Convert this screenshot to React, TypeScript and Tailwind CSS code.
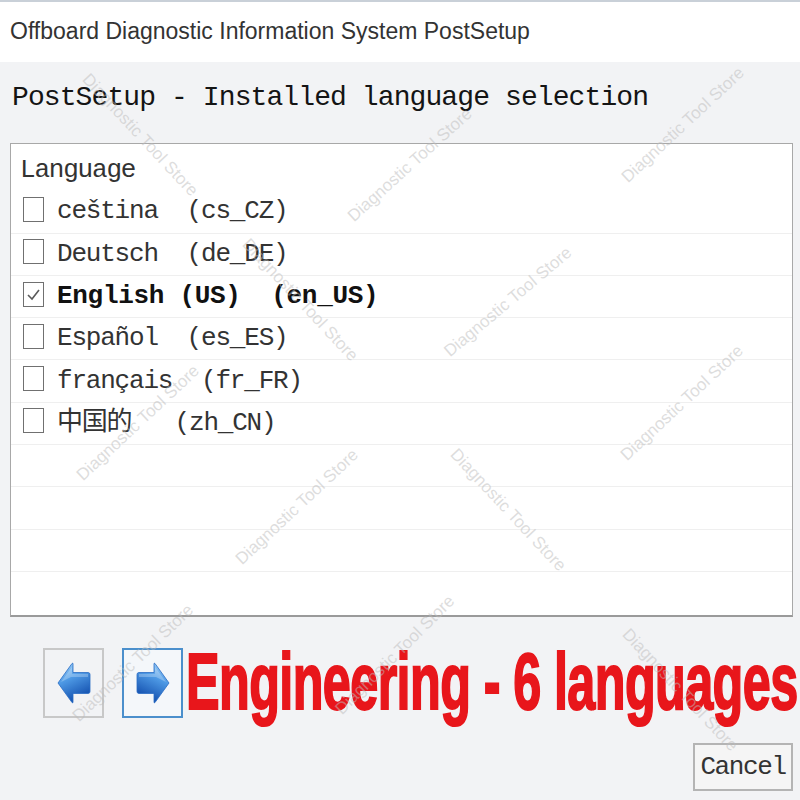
import React from 'react';

const languages = [
  { label: 'ceština  (cs_CZ)', checked: false },
  { label: 'Deutsch  (de_DE)', checked: false },
  { label: 'English (US)  (en_US)', checked: true },
  { label: 'Español  (es_ES)', checked: false },
  { label: 'français  (fr_FR)', checked: false },
  { label: '中国的   (zh_CN)', checked: false },
];

function Checkbox({ checked }: { checked: boolean }) {
  return (
    <div className="flex h-[25px] w-[21px] shrink-0 items-center justify-center border-[1.5px] border-[#707070] bg-white">
      {checked && (
        <svg width="15" height="15" viewBox="0 0 15 15">
          <polyline points="2,8 6,12 13,3" fill="none" stroke="#5a5a5a" strokeWidth="1.6" />
        </svg>
      )}
    </div>
  );
}

function Arrow({ flip }: { flip?: boolean }) {
  const id = flip ? 'arrR' : 'arrL';
  return (
    <svg width="34" height="42" viewBox="0 0 34 42" className={flip ? '-scale-x-100' : ''}>
      <defs>
        <linearGradient id={id} x1="0" y1="0" x2="0.4" y2="1">
          <stop offset="0" stopColor="#b4dcfa" />
          <stop offset="0.45" stopColor="#4f9be6" />
          <stop offset="1" stopColor="#1552b0" />
        </linearGradient>
      </defs>
      <path
        d="M1 21 L15 1.5 Q16 0.5 16 2 L16 10.5 L31 10.5 Q33 10.5 33 12.5 L33 29.5 Q33 31.5 31 31.5 L16 31.5 L16 40 Q16 41.5 15 40.5 Z"
        fill={`url(#${id})`}
        stroke="#2a6cc4"
        strokeWidth="0.8"
      />
      <path d="M4 20 L15 5 L15 12 L31 12 L31 15 L14 15 Z" fill="#ffffff" opacity="0.25" />
    </svg>
  );
}

function Mark({ className }: { className: string }) {
  return (
    <span
      className={`pointer-events-none absolute -translate-x-1/2 -translate-y-1/2 whitespace-nowrap text-[17px] text-[#bcbcbc]/50 ${className}`}
    >
      Diagnostic Tool Store
    </span>
  );
}

export default function App() {
  return (
    <div className="relative flex h-[800px] w-[800px] flex-col overflow-hidden bg-[#f2f3f5] font-['Liberation_Sans',sans-serif]">
      <div className="flex h-[62px] items-center border-t-2 border-[#c9d0d8] bg-white pl-[10px] pb-[1px] text-[23px] text-[#333333]">
        Offboard Diagnostic Information System PostSetup
      </div>

      <div className="pl-[12px] pt-[20px] font-['Liberation_Mono',monospace] text-[28px] leading-[32px] tracking-[-0.9px] whitespace-pre text-[#141414]">
        PostSetup - Installed language selection
      </div>

      <div className="mt-[29px] ml-[10px] mr-[7px] h-[474px] border border-[#a8a8a8] border-b-2 border-b-[#9a9a9a] bg-white pt-[5px] font-['Liberation_Mono','Noto_Sans_CJK_SC',monospace] text-[26px] tracking-[-1.2px] text-[#333333]">
        <div className="flex h-[42.3px] items-center pl-[9px]">Language</div>
        {languages.map((lang) => (
          <div key={lang.label} className="flex h-[42.3px] items-center border-b border-[#efefef] pl-[12px]">
            <div className="-mt-[5px]">
              <Checkbox checked={lang.checked} />
            </div>
            <span
              className={`ml-[13px] whitespace-pre ${lang.checked ? 'font-bold tracking-[-0.3px] text-[#111111]' : ''}`}
            >
              {lang.label}
            </span>
          </div>
        ))}
        <div className="h-[42.3px] border-b border-[#efefef]" />
        <div className="h-[42.3px] border-b border-[#efefef]" />
        <div className="h-[42.3px] border-b border-[#efefef]" />
      </div>

      <div className="mt-[31px] ml-[43px] flex items-center">
        <div className="flex h-[70px] w-[61px] items-center justify-center border-2 border-[#c8c8c8]">
          <Arrow />
        </div>
        <div className="ml-[18px] flex h-[70px] w-[61px] items-center justify-center border-2 border-[#4b8fcc] bg-[#f4f7fa]">
          <Arrow flip />
        </div>
        <div className="ml-[3px] flex h-[70px] w-[611px] items-center">
          <span className="-mt-[2px] inline-block origin-left scale-x-[0.63] whitespace-nowrap text-[80px] leading-none font-bold tracking-[-1px] text-[#e8161b] [-webkit-text-stroke:2px_#e8161b]">
            Engineering - 6 languages
          </span>
        </div>
      </div>

      <div className="mt-[25px] mr-[7px] flex justify-end">
        <div className="flex h-[48px] w-[100px] items-center justify-center border-2 border-[#b4b4b4] bg-[#f5f5f5] font-['Liberation_Mono',monospace] text-[26px] tracking-[-1.4px] text-[#333333]">
          Cancel
        </div>
      </div>

      <Mark className="left-[140px] top-[135px] rotate-[47deg]" />
      <Mark className="left-[410px] top-[165px] -rotate-[42deg]" />
      <Mark className="left-[683px] top-[125px] -rotate-[43deg]" />
      <Mark className="left-[300px] top-[300px] rotate-[47deg]" />
      <Mark className="left-[508px] top-[302px] -rotate-[40deg]" />
      <Mark className="left-[682px] top-[403px] -rotate-[43deg]" />
      <Mark className="left-[138px] top-[423px] -rotate-[43deg]" />
      <Mark className="left-[297px] top-[507px] -rotate-[43deg]" />
      <Mark className="left-[508px] top-[510px] rotate-[47deg]" />
      <Mark className="left-[133px] top-[663px] -rotate-[44deg]" />
      <Mark className="left-[395px] top-[655px] -rotate-[45deg]" />
      <Mark className="left-[680px] top-[690px] rotate-[47deg]" />
    </div>
  );
}
